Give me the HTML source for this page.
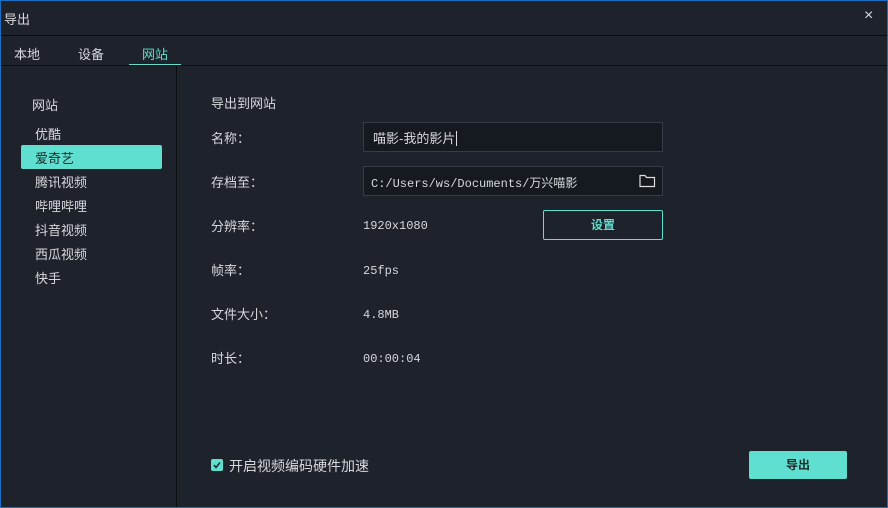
<!DOCTYPE html>
<html><head><meta charset="utf-8"><style>
*{margin:0;padding:0;box-sizing:border-box}
body{width:888px;height:508px;overflow:hidden;background:#1e222a;font-family:"Liberation Sans","Noto Sans CJK SC",sans-serif;color:#d6d8dc;font-size:13px;position:relative}
.frame{position:absolute;left:0;top:0;width:888px;height:508px;border:1px solid #1a6fc4;pointer-events:none}
.a{position:absolute;white-space:nowrap}
.line{position:absolute;background:#0b0d10}
.mono{font-family:"Liberation Mono","Noto Sans CJK SC",monospace;font-size:12px}
.box{position:absolute;background:#151920;border:1px solid #353c47}
</style></head><body>
<div class="a" style="left:4px;top:9px;font-size:13px">导出</div>
<div class="a" style="left:864px;top:7px;font-size:16px">×</div>
<div class="line" style="left:0;top:35px;width:888px;height:1px"></div>
<div class="a" style="left:14px;top:44px">本地</div>
<div class="a" style="left:78px;top:44px">设备</div>
<div class="a" style="left:142px;top:44px;color:#5fdfcf">网站</div>
<div class="a" style="left:129px;top:64px;width:52px;height:2px;background:#5fdfcf"></div>
<div class="line" style="left:0;top:65px;width:888px;height:1px"></div>
<div class="line" style="left:176px;top:66px;width:1px;height:442px"></div>
<div class="a" style="left:32px;top:95px">网站</div>
<div class="a" style="left:35px;top:124px">优酷</div>
<div class="a" style="left:21px;top:145px;width:141px;height:24px;background:#5fdfcf;border-radius:2px"></div>
<div class="a" style="left:35px;top:148px;color:#1b2a2a">爱奇艺</div>
<div class="a" style="left:35px;top:172px">腾讯视频</div>
<div class="a" style="left:35px;top:196px">哔哩哔哩</div>
<div class="a" style="left:35px;top:220px">抖音视频</div>
<div class="a" style="left:35px;top:244px">西瓜视频</div>
<div class="a" style="left:35px;top:268px">快手</div>
<div class="a" style="left:211px;top:93px">导出到网站</div>
<div class="a" style="left:211px;top:128px">名称：</div>
<div class="a" style="left:211px;top:172px">存档至：</div>
<div class="a" style="left:211px;top:216px">分辨率：</div>
<div class="a" style="left:211px;top:260px">帧率：</div>
<div class="a" style="left:211px;top:304px">文件大小：</div>
<div class="a" style="left:211px;top:348px">时长：</div>
<div class="box" style="left:363px;top:122px;width:300px;height:30px"></div>
<div class="a" style="left:373px;top:128px">喵影-我的影片<span style="display:inline-block;width:1px;height:15px;background:#ddd;vertical-align:-3px;margin-left:1px"></span></div>
<div class="box" style="left:363px;top:166px;width:300px;height:30px"></div>
<div class="a mono" style="left:371px;top:174px;font-size:12px">C:/Users/ws/Documents/万兴喵影</div>
<svg class="a" style="left:639px;top:173px" width="17" height="15" viewBox="0 0 17 15"><path d="M1 2.5h5l1.5 2h8v9h-14.5z" fill="none" stroke="#ddd" stroke-width="1.2"/></svg>
<div class="a mono" style="left:363px;top:219px">1920x1080</div>
<div class="a" style="left:543px;top:210px;width:120px;height:30px;border:1px solid #5fdfcf;border-radius:2px;color:#5fdfcf;text-align:center;line-height:28px;font-weight:bold;font-size:12px">设置</div>
<div class="a mono" style="left:363px;top:264px">25fps</div>
<div class="a mono" style="left:363px;top:308px">4.8MB</div>
<div class="a mono" style="left:363px;top:352px">00:00:04</div>
<div class="a" style="left:211px;top:459px;width:12px;height:12px;background:#5fdfcf;border-radius:2px"></div>
<svg class="a" style="left:211px;top:459px" width="12" height="12"><path d="M3 6l2 2.5 4-5" stroke="#1b2a2a" stroke-width="1.5" fill="none"/></svg>
<div class="a" style="left:229px;top:456px;font-size:14px">开启视频编码硬件加速</div>
<div class="a" style="left:749px;top:451px;width:98px;height:28px;background:#5fdfcf;border-radius:2px;color:#1b2a2a;text-align:center;line-height:28px;font-weight:bold;font-size:12px">导出</div>
<div class="frame"></div>
</body></html>
